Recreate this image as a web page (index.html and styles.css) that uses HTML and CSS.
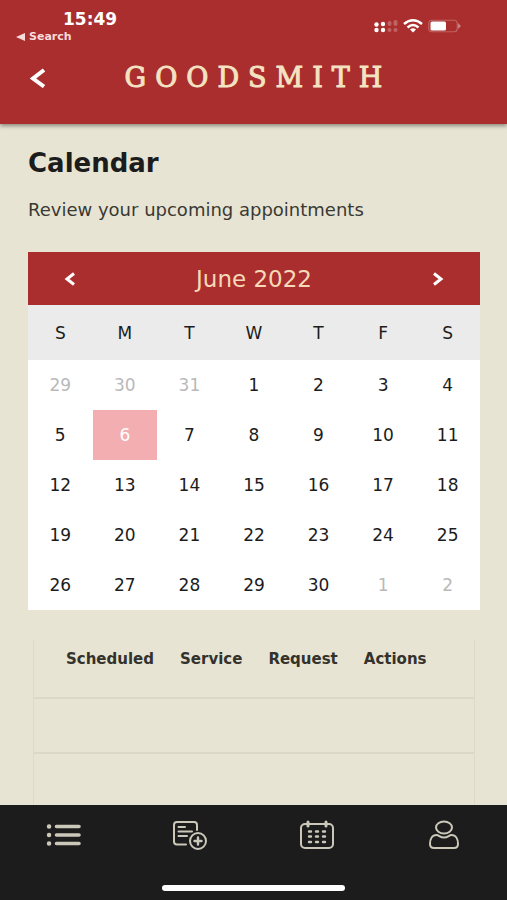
FILE: index.html
```html
<!DOCTYPE html>
<html lang="en">
<head>
    <meta charset="utf-8">
    <meta name="viewport" content="width=device-width, initial-scale=1">
    <title>Goodsmith - Calendar</title>
    <link rel="stylesheet" href="styles.css">
</head>
<body>
    <header class="header">
        <div class="status-bar">
            <div class="status-left">
                <div class="time">15:49</div>
                <a href="#" class="back-app">
                    <svg width="9" height="8" viewBox="0 0 9 8"><path d="M0 4L9 0V8Z" fill="currentColor"/></svg>
                    Search
                </a>
            </div>
            <div class="status-icons">
                <svg width="24" height="14" viewBox="0 0 24 14" fill="#fff">
                    <circle cx="2.5" cy="5.5" r="2.2"/>
                    <circle cx="2.5" cy="11" r="2.2"/>
                    <circle cx="9" cy="5" r="2.2"/>
                    <circle cx="9" cy="11" r="2.2"/>
                    <g opacity="0.25">
                        <rect x="13.5" y="2" width="4" height="5" rx="2"/>
                        <circle cx="15.5" cy="11" r="2"/>
                        <rect x="19.5" y="1" width="4" height="6" rx="2"/>
                        <circle cx="21.5" cy="11" r="2"/>
                    </g>
                </svg>
                <svg width="20" height="14" viewBox="0 0 20 14" fill="none" stroke="#fff" stroke-width="2.4">
                    <path d="M1 5Q10 -2.5 19 5"/>
                    <path d="M4.5 8.5Q10 3.5 15.5 8.5"/>
                    <path d="M7 10.5Q10 8 13 10.5L10 13.5Z" fill="#fff" stroke="none"/>
                </svg>
                <svg width="33" height="14" viewBox="0 0 33 14">
                    <rect x="0.75" y="1.25" width="28.5" height="11.5" rx="3" fill="none" stroke="#fff" stroke-opacity="0.25" stroke-width="1.2"/>
                    <path d="M30 4L33 7L30 10Z" fill="#fff" fill-opacity="0.4"/>
                    <rect x="2.5" y="2.5" width="15.5" height="9" rx="1.5" fill="#fff"/>
                </svg>
            </div>
        </div>
        <div class="title-bar">
            <button class="back" aria-label="Back">
                <svg width="16" height="20" viewBox="0 0 16 20"><path d="M14 2L3 10.5L14 18.5"/></svg>
            </button>
            <div class="logo">GOODSMITH</div>
        </div>
    </header>

    <main class="content">
        <h1>Calendar</h1>
        <p class="intro">Review your upcoming appointments</p>

        <section class="calendar">
            <div class="calendar-header">
                <button aria-label="Previous month">
                    <svg width="12" height="14" viewBox="0 0 12 14"><path d="M10 1.5L3 7L10 12.5"/></svg>
                </button>
                <h2>June 2022</h2>
                <button aria-label="Next month">
                    <svg width="12" height="14" viewBox="0 0 12 14"><path d="M2 1.5L9 7L2 12.5"/></svg>
                </button>
            </div>
            <table class="days">
                <thead>
                    <tr><th>S</th><th>M</th><th>T</th><th>W</th><th>T</th><th>F</th><th>S</th></tr>
                </thead>
                <tbody>
                    <tr>
                        <td><button class="other">29</button></td>
                        <td><button class="other">30</button></td>
                        <td><button class="other">31</button></td>
                        <td><button>1</button></td>
                        <td><button>2</button></td>
                        <td><button>3</button></td>
                        <td><button>4</button></td>
                    </tr>
                    <tr>
                        <td><button>5</button></td>
                        <td><button class="selected">6</button></td>
                        <td><button>7</button></td>
                        <td><button>8</button></td>
                        <td><button>9</button></td>
                        <td><button>10</button></td>
                        <td><button>11</button></td>
                    </tr>
                    <tr>
                        <td><button>12</button></td>
                        <td><button>13</button></td>
                        <td><button>14</button></td>
                        <td><button>15</button></td>
                        <td><button>16</button></td>
                        <td><button>17</button></td>
                        <td><button>18</button></td>
                    </tr>
                    <tr>
                        <td><button>19</button></td>
                        <td><button>20</button></td>
                        <td><button>21</button></td>
                        <td><button>22</button></td>
                        <td><button>23</button></td>
                        <td><button>24</button></td>
                        <td><button>25</button></td>
                    </tr>
                    <tr>
                        <td><button>26</button></td>
                        <td><button>27</button></td>
                        <td><button>28</button></td>
                        <td><button>29</button></td>
                        <td><button>30</button></td>
                        <td><button class="other">1</button></td>
                        <td><button class="other">2</button></td>
                    </tr>
                </tbody>
            </table>
        </section>

        <div class="appointments">
            <table>
                <thead>
                    <tr><th>Scheduled</th><th>Service</th><th>Request</th><th>Actions</th></tr>
                </thead>
                <tbody>
                    <tr><td colspan="4"></td></tr>
                    <tr><td colspan="4"></td></tr>
                </tbody>
            </table>
        </div>
    </main>

    <footer class="footer">
        <nav class="tabs">
            <a href="#" aria-label="List">
                <svg width="36" height="30" viewBox="0 0 36 30">
                    <path d="M11.5 6.5H34M11.5 15H34M11.5 23.5H34" stroke-width="3.6"/>
                    <path d="M4 6.5h0.1M4 15h0.1M4 23.5h0.1" stroke-width="4.4"/>
                </svg>
            </a>
            <a href="#" aria-label="New request">
                <svg width="36" height="30" viewBox="0 0 36 30">
                    <path d="M14 24.5H5Q2 24.5 2 21.5V5Q2 2 5 2H22Q25 2 25 5V10"/>
                    <path d="M6.5 7H13M6.5 11.5H20M6.5 16H15"/>
                    <circle cx="26" cy="21" r="8"/>
                    <path d="M22.5 21H29.5M26 17.5V24.5" stroke-width="2.4"/>
                </svg>
            </a>
            <a href="#" aria-label="Calendar">
                <svg width="36" height="30" viewBox="0 0 36 30">
                    <rect x="2" y="4" width="32" height="24" rx="4"/>
                    <path d="M9 2V6M27 2V6" stroke-width="3"/>
                    <path d="M10 11.5h2M17 11.5h2M24 11.5h2M10 16.5h2M17 16.5h2M24 16.5h2M10 22h2M17 22h2M24 22h2" stroke-width="2.4"/>
                </svg>
            </a>
            <a href="#" aria-label="Profile">
                <svg width="36" height="30" viewBox="0 0 36 30">
                    <ellipse cx="18" cy="7.5" rx="8" ry="6"/>
                    <path d="M10.5 15C6 15 4 19.5 4 24Q4 28 8 28H28Q32 28 32 24C32 19.5 30 15 25.5 15C23 15 22 17.5 18 17.5S13 15 10.5 15Z"/>
                </svg>
            </a>
        </nav>
        <div class="home-bar"></div>
    </footer>
</body>
</html>
```

FILE: styles.css
```css
* {
    box-sizing: border-box;
}
body {
    margin: 0;
    height: 100vh;
    display: flex;
    flex-direction: column;
    background-color: #e8e4d3;
    color: #1c1c1c;
    font-family: "DejaVu Sans", Verdana, sans-serif;
}
button {
    padding: 0;
    border: 0;
    background: none;
    color: inherit;
    font: inherit;
    cursor: pointer;
}
svg {
    display: block;
}

/* header */
.header {
    position: relative;
    padding: 9px 16px 30px;
    background-color: #aa2e2e;
    color: #fff;
    box-shadow: 0 2px 4px rgba(0, 0, 0, 0.4);
}
.status-bar {
    display: flex;
    justify-content: space-between;
    padding-right: 30px;
}
.status-left {
    display: flex;
    flex-direction: column;
}
.time {
    padding-left: 47px;
    font-size: 17px;
    font-weight: bold;
    line-height: 20px;
}
.back-app {
    display: flex;
    align-items: center;
    gap: 4px;
    color: #f8dcdc;
    font-size: 11px;
    font-weight: bold;
    line-height: 16px;
    text-decoration: none;
}
.status-icons {
    display: flex;
    gap: 5px;
    padding-top: 10px;
}
.title-bar {
    display: grid;
    grid-template-columns: 44px 1fr 44px;
    align-items: center;
    margin-top: 17px;
}
.back {
    justify-self: center;
}
.back path,
.calendar-header path {
    fill: none;
    stroke: #fff;
    stroke-width: 3;
}
.back path {
    stroke-width: 4;
}
.logo {
    padding-left: 9px;
    color: #f3e3c3;
    font-family: "DejaVu Serif", serif;
    font-size: 27px;
    letter-spacing: 9px;
    line-height: 32px;
    text-align: center;
    -webkit-text-stroke: 1px #f3e3c3;
}

/* content */
.content {
    flex: 1;
    min-height: 0;
    overflow-y: auto;
    scrollbar-width: none;
    padding: 24px 27px 0 28px;
}
h1 {
    margin: 0;
    font-size: 26px;
    line-height: 30px;
}
.intro {
    margin: 20px 0 30px;
    color: #3a3933;
    font-size: 18px;
    line-height: 24px;
}

/* calendar */
.calendar {
    background-color: #fff;
}
.calendar-header {
    display: flex;
    align-items: center;
    justify-content: space-between;
    height: 53px;
    padding: 0 36px;
    background-color: #aa2e2e;
}
.calendar-header h2 {
    margin: 0;
    color: #f5d9b8;
    font-size: 23px;
    font-weight: normal;
}
.days {
    width: 100%;
    table-layout: fixed;
    border-collapse: collapse;
    font-size: 17px;
}
.days th {
    height: 55px;
    padding: 0;
    background-color: #ebebeb;
    font-weight: normal;
}
.days td {
    padding: 0;
}
.days td button {
    display: block;
    width: 100%;
    height: 50px;
}
.days .other {
    color: #b9b9b9;
}
.days .selected {
    background-color: #f2aeb1;
    color: #fff;
}

/* appointments */
.appointments {
    margin: 30px 5px 0;
    border: 1px solid #dedac9;
    border-top: 0;
}
.appointments table {
    width: 100%;
    border-collapse: collapse;
}
.appointments th {
    width: 1px;
    height: 58px;
    padding: 9px 13px 0;
    color: #33322c;
    font-size: 15px;
    line-height: 20px;
    text-align: left;
    vertical-align: top;
}
.appointments th:first-child {
    padding-left: 32px;
}
.appointments th:last-child {
    width: auto;
}
.appointments td {
    height: 55px;
    padding: 0;
}
.appointments tr {
    border-bottom: 2px solid #dbd8c8;
}

/* bottom navigation */
.footer {
    display: flex;
    flex-direction: column;
    align-items: center;
    gap: 35px;
    padding: 15px 0 9px;
    background-color: #1c1c1c;
}
.tabs {
    display: flex;
    width: 100%;
}
.tabs a {
    flex: 1;
    display: flex;
    justify-content: center;
}
.tabs svg {
    fill: none;
    stroke: #cbc8ba;
    stroke-width: 2;
    stroke-linecap: round;
    stroke-linejoin: round;
}
.home-bar {
    width: 36%;
    height: 6px;
    border-radius: 3px;
    background-color: #fff;
}
```
